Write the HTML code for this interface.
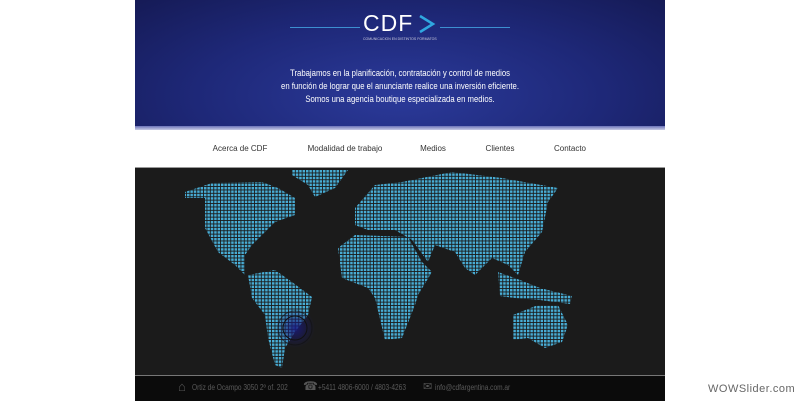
<!DOCTYPE html>
<html><head><meta charset="utf-8"><style>
body{margin:0;width:800px;height:400px;background:#fff;position:relative;overflow:hidden;font-family:"Liberation Sans",Arial,sans-serif}
#hdr{position:absolute;left:135px;top:0;width:530px;height:128px;background:radial-gradient(ellipse 70% 110% at 50% 75%,#2b3a9a 0%,#1e2878 55%,#151a55 100%)}
#hbar{position:absolute;left:135px;top:126px;width:530px;height:4px;background:linear-gradient(#6a72b8,#c9cce6)}
.t{position:absolute;left:0;width:530px;text-align:center;color:#fff;font-size:9px;transform:scaleX(.86)}
#nav{position:absolute;left:135px;top:130px;width:530px;height:37px;background:#fff}
.n{position:absolute;top:14px;font-size:8px;color:#333;transform:translateX(-50%);white-space:nowrap}
#map{position:absolute;left:135px;top:167px;width:530px;height:208px;background:#1b1b1b;border-top:1px solid #999}
#ft{position:absolute;left:135px;top:375px;width:530px;height:25px;background:#0b0b0b;border-top:1px solid #777;color:#5a5a5a;font-size:8px}
.f{position:absolute;top:7px;transform:scaleX(.82);transform-origin:left;white-space:nowrap}
</style></head><body>
<div id="hdr">
 <div style="position:absolute;left:155px;top:27px;width:70px;height:1px;background:#3d8fd0"></div>
 <div style="position:absolute;left:305px;top:27px;width:70px;height:1px;background:#3d8fd0"></div>
 <div style="position:absolute;left:228px;top:10px;font-size:23px;color:#fff;letter-spacing:1px">CDF</div>
 <svg style="position:absolute;left:282px;top:13px" width="20" height="22"><path d="M3 3 L16 11 L3 19" fill="none" stroke="#2fa7e0" stroke-width="2.5"/></svg>
 <div style="position:absolute;left:228px;top:37px;font-size:3.5px;color:#ccd">COMUNICACION EN DISTINTOS FORMATOS</div>
 <div class="t" style="top:68px">Trabajamos en la planificación, contratación y control de medios</div>
 <div class="t" style="top:81px">en función de lograr que el anunciante realice una inversión eficiente.</div>
 <div class="t" style="top:94px">Somos una agencia boutique especializada en medios.</div>
</div>
<div id="hbar"></div>
<div id="nav">
 <div class="n" style="left:105px">Acerca de CDF</div>
 <div class="n" style="left:210px">Modalidad de trabajo</div>
 <div class="n" style="left:298px">Medios</div>
 <div class="n" style="left:365px">Clientes</div>
 <div class="n" style="left:435px">Contacto</div>
</div>
<div id="map"></div>
<svg style="position:absolute;left:0;top:0" width="800" height="400">
<defs><pattern id="d" width="3.4" height="3.4" patternUnits="userSpaceOnUse"><rect width="2.5" height="2.5" fill="#48acd4"/></pattern>
<radialGradient id="g"><stop offset="0" stop-color="#1a1a80" stop-opacity=".9"/><stop offset="1" stop-color="#1a1a60" stop-opacity="0"/></radialGradient></defs>
<g fill="url(#d)">
<polygon points="185,192 212,183 262,182 278,188 295,198 295,215 275,222 262,235 252,245 245,255 245,275 235,265 218,252 205,228 205,198 185,198"/>
<polygon points="292,170 348,170 335,188 315,197 308,185 292,175"/>
<polygon points="248,275 275,270 292,282 312,297 308,315 295,332 285,348 282,368 275,365 268,338 265,315 252,298"/>
<polygon points="355,208 375,185 402,182 452,172 502,178 558,188 548,202 542,232 525,252 518,275 508,265 492,258 475,275 465,268 455,252 435,245 428,262 412,240 395,230 368,230 355,225"/>
<polygon points="338,248 355,235 408,237 422,262 432,272 418,295 415,305 402,338 385,340 375,298 368,288 342,278"/>
<polygon points="498,272 520,280 540,288 572,296 570,304 540,300 515,298 500,296"/>
<polygon points="513,315 538,305 558,305 568,325 562,342 545,348 528,338 513,340"/>
</g>
<circle cx="295" cy="328" r="20" fill="url(#g)"/>
<circle cx="295" cy="328" r="12" fill="none" stroke="#111" stroke-width="1"/>
<circle cx="295" cy="328" r="17" fill="none" stroke="#111" stroke-width="1" opacity=".6"/>
</svg>
<div id="ft">
 <span style="position:absolute;left:43px;top:3px;font-size:13px;color:#555">⌂</span>
 <span class="f" style="left:57px">Ortiz de Ocampo 3050 2º of. 202</span>
 <span style="position:absolute;left:168px;top:3px;font-size:12px;color:#555">☎</span>
 <span class="f" style="left:183px">+5411 4806-6000 / 4803-4263</span>
 <span style="position:absolute;left:288px;top:4px;font-size:11px;color:#555">✉</span>
 <span class="f" style="left:300px">info@cdfargentina.com.ar</span>
</div>
<div style="position:absolute;left:708px;top:383px;font-size:11px;color:#666;letter-spacing:.5px">WOWSlider.com</div>
</body></html>
